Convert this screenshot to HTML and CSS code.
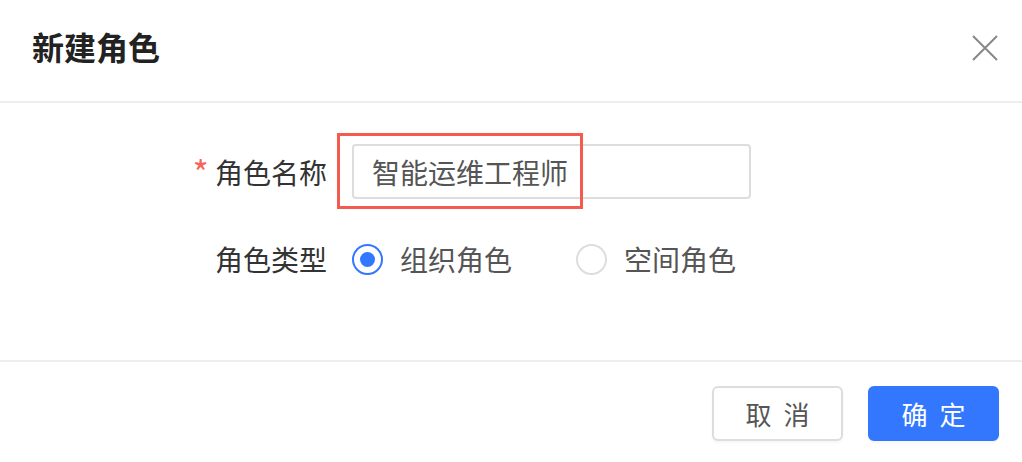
FILE: index.html
```html
<!DOCTYPE html>
<html lang="zh-CN">
<head>
    <meta charset="UTF-8">
    <meta name="viewport" content="width=device-width, initial-scale=1.0">
    <title>新建角色</title>
    <link rel="stylesheet" href="styles.css">
</head>
<body>

    <div class="dialog">
        <div class="dialog-header">
            <h1 class="dialog-title">新建角色</h1>
            <button type="button" class="close-btn" aria-label="关闭">
                <svg width="26" height="26" viewBox="0 0 26 26">
                    <path d="M1 1 L25 25 M25 1 L1 25" stroke="#888" stroke-width="2" fill="none"/>
                </svg>
            </button>
        </div>

        <form class="dialog-body">
            <div class="form-row">
                <label class="form-label" for="roleName"><span class="required">*</span> 角色名称</label>
                <div class="form-field">
                    <input type="text" id="roleName" class="text-input" value="智能运维工程师">
                    <div class="highlight"></div>
                </div>
            </div>
            <div class="form-row">
                <span class="form-label">角色类型</span>
                <div class="form-field radios">
                    <label class="radio">
                        <input type="radio" name="roleType" checked>
                        <span class="radio-mark"></span>
                        <span>组织角色</span>
                    </label>
                    <label class="radio">
                        <input type="radio" name="roleType">
                        <span class="radio-mark"></span>
                        <span>空间角色</span>
                    </label>
                </div>
            </div>
        </form>

        <div class="dialog-footer">
            <button type="button" class="btn">取消</button>
            <button type="button" class="btn btn-primary">确定</button>
        </div>
    </div>

</body>
</html>
```

FILE: styles.css
```css
body {
    margin: 0;
    background: #fff;
    font-family: "Noto Sans CJK SC", "Noto Sans", sans-serif;
}
.dialog {
    width: 1022px;
    height: 462px;
    display: flex;
    flex-direction: column;
}
.dialog-header {
    height: 103px;
    border-bottom: 2px solid #eeeeee;
    display: flex;
    align-items: center;
    justify-content: space-between;
    padding: 0 24px 10px 32px;
    box-sizing: border-box;
}
.dialog-title {
    margin: 0;
    font-size: 32px;
    font-weight: 700;
    color: #222;
    line-height: 40px;
}
.close-btn {
    border: none;
    background: none;
    padding: 0;
    width: 26px;
    height: 26px;
    cursor: pointer;
    margin-top: 4px;
}
.dialog-body {
    flex: 1;
    margin: 0;
    padding-top: 41px;
    border-bottom: 2px solid #eeeeee;
}
.form-row {
    display: flex;
    align-items: center;
    margin-bottom: 40px;
}
.form-label {
    width: 327px;
    text-align: right;
    font-size: 28px;
    color: #333;
    line-height: 40px;
    flex-shrink: 0;
}
.required {
    color: #f7625a;
    font-size: 34px;
    line-height: 28px;
    vertical-align: -2px;
}
.form-field {
    position: relative;
    margin-left: 25px;
}
.text-input {
    width: 399px;
    height: 55px;
    box-sizing: border-box;
    border: 2px solid #dddddd;
    border-radius: 4px;
    padding: 0 18px;
    font-family: inherit;
    font-size: 28px;
    color: #555;
    outline: none;
}
.highlight {
    position: absolute;
    left: -15px;
    top: -11px;
    width: 246px;
    height: 76px;
    box-sizing: border-box;
    border: 3px solid #f45b4e;
    pointer-events: none;
}
.radios {
    display: flex;
    gap: 64px;
}
.radio {
    display: flex;
    align-items: center;
    gap: 17px;
    font-size: 28px;
    color: #555;
    cursor: pointer;
}
.radio input {
    display: none;
}
.radio-mark {
    width: 31px;
    height: 31px;
    box-sizing: border-box;
    border: 2px solid #dddddd;
    border-radius: 50%;
    display: flex;
    align-items: center;
    justify-content: center;
}
.radio input:checked + .radio-mark {
    border-color: #3377ff;
}
.radio input:checked + .radio-mark::after {
    content: "";
    width: 15px;
    height: 15px;
    border-radius: 50%;
    background: #3377ff;
}
.dialog-footer {
    height: 100px;
    display: flex;
    justify-content: flex-end;
    align-items: flex-start;
    gap: 25px;
    padding: 24px 23px 0 0;
    box-sizing: border-box;
}
.btn {
    width: 131px;
    height: 55px;
    border: 2px solid #dddddd;
    border-radius: 6px;
    background: #fff;
    color: #555;
    font-family: inherit;
    font-size: 26px;
    letter-spacing: 12px;
    text-indent: 12px;
    cursor: pointer;
    box-shadow: 0 2px 3px rgba(0, 0, 0, 0.04);
}
.btn-primary {
    background: #3377ff;
    border-color: #3377ff;
    color: #fff;
}
```
